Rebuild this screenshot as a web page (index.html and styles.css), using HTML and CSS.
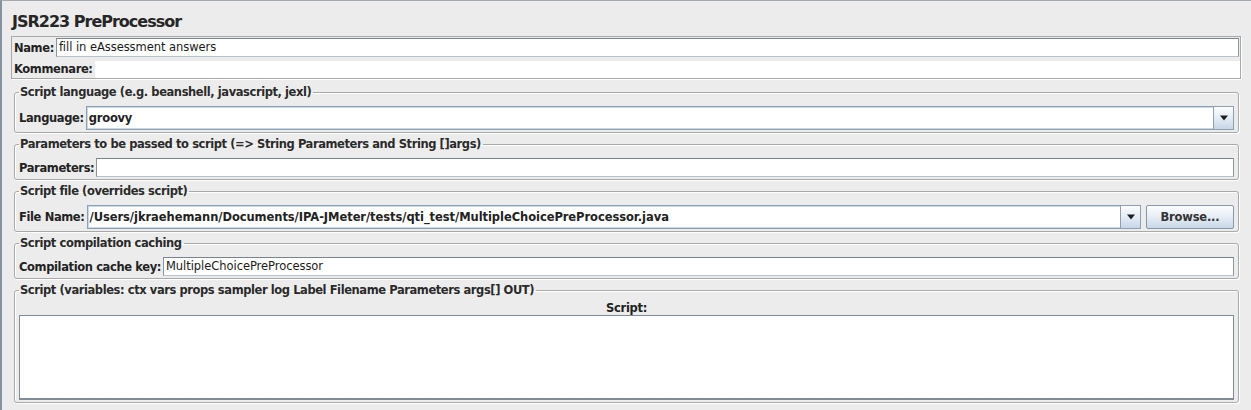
FILE: index.html
```html
<!DOCTYPE html>
<html>
<head>
<meta charset="utf-8">
<link rel="stylesheet" href="styles.css">
</head>
<body>
<div class="frame">
  <h1 class="title">JSR223 PreProcessor</h1>

  <div class="namepanel">
    <div class="row">
      <span class="lbl">Name:</span>
      <div class="field name-field">fill in eAssessment answers</div>
    </div>
    <div class="row comment-row">
      <span class="lbl">Kommenare:</span>
      <div class="comment-area"></div>
    </div>
  </div>

  <fieldset class="group">
    <legend>Script language (e.g. beanshell, javascript, jexl)</legend>
    <div class="row">
      <span class="lbl">Language:</span>
      <div class="combo">
        <span class="combo-text">groovy</span>
        <span class="combo-btn"><svg width="10" height="6" viewBox="0 0 10 6"><path d="M1 0.5h8L5 5.5z" fill="#1e1e1e"/></svg></span>
      </div>
    </div>
  </fieldset>

  <fieldset class="group">
    <legend>Parameters to be passed to script (=&gt; String Parameters and String []args)</legend>
    <div class="row">
      <span class="lbl">Parameters:</span>
      <div class="field"></div>
    </div>
  </fieldset>

  <fieldset class="group">
    <legend>Script file (overrides script)</legend>
    <div class="row">
      <span class="lbl">File Name:</span>
      <div class="combo">
        <span class="combo-text path">/Users/jkraehemann/Documents/IPA-JMeter/tests/qti_test/MultipleChoicePreProcessor.java</span>
        <span class="combo-btn"><svg width="10" height="6" viewBox="0 0 10 6"><path d="M1 0.5h8L5 5.5z" fill="#1e1e1e"/></svg></span>
      </div>
      <button class="btn">Browse...</button>
    </div>
  </fieldset>

  <fieldset class="group">
    <legend>Script compilation caching</legend>
    <div class="row">
      <span class="lbl">Compilation cache key:</span>
      <div class="field">MultipleChoicePreProcessor</div>
    </div>
  </fieldset>

  <fieldset class="group script-group">
    <legend>Script (variables: ctx vars props sampler log Label Filename Parameters args[] OUT)</legend>
    <div class="script-label">Script:</div>
    <div class="textarea"></div>
  </fieldset>
</div>
</body>
</html>
```

FILE: styles.css
```css
html, body {
  margin: 0;
  padding: 0;
  background: #ececec;
}

body {
  font-family: "DejaVu Sans", "Noto Sans", sans-serif;
  color: #1f1f1f;
  width: 1251px;
  height: 410px;
  overflow: hidden;
}

.frame {
  box-sizing: border-box;
  height: 410px;
  border-left: 2px solid #8593a0;
  border-top: 1px solid #a3a9ae;
  display: flex;
  flex-direction: column;
}

.title {
  margin: 11px 0 5px 10px;
  font-size: 16px;
  line-height: 19px;
  font-weight: bold;
  color: #262626;
  letter-spacing: -1px;
}

.row {
  display: flex;
  align-items: center;
  gap: 2px;
}

.lbl {
  font-size: 11.5px;
  font-weight: bold;
  color: #222;
  white-space: nowrap;
  letter-spacing: -0.38px;
}

/* Name / comment panel */
.namepanel {
  margin: 0 10px 6px 9px;
  border: 1px solid #a8a8a8;
  box-shadow: 1px 1px 0 #fff;
  padding: 1px 1px 0 2px;
  display: flex;
  flex-direction: column;
  gap: 4px;
}

.field {
  flex: 1;
  box-sizing: border-box;
  height: 19px;
  background: #fff;
  border: 1px solid #8b96a1;
  border-top-color: #77838f;
  border-bottom-color: #b9c1c9;
  font-size: 11.5px;
  line-height: 17px;
  padding-left: 2px;
  color: #1a1a1a;
  white-space: nowrap;
  overflow: hidden;
  letter-spacing: -0.05px;
}

.comment-row .lbl {
  padding-bottom: 1px;
}

.comment-area {
  flex: 1;
  height: 17px;
  background: #fff;
  margin-right: -1px;
}

/* Titled groups */
.group {
  margin: 0 12px 4px 12px;
  padding: 7px 4px 2px 4px;
  border: 1px solid #a9a9a9;
  border-radius: 3px;
  box-shadow: inset 1px 1px 0 #fff, 1px 1px 0 #fff;
  min-width: 0;
}

.group legend {
  padding: 0 2px 0 1px;
  font-size: 11.5px;
  line-height: 14px;
  font-weight: bold;
  color: #2a2a2a;
  letter-spacing: -0.42px;
}

.combo {
  flex: 1;
  display: flex;
  box-sizing: border-box;
  height: 24px;
  background: #fff;
  border: 1px solid #8e9fb1;
  box-shadow: inset 0 0 0 1px #c9d8ea;
  min-width: 0;
}

.combo-text {
  flex: 1;
  font-size: 11.5px;
  font-weight: bold;
  line-height: 22px;
  padding-left: 2px;
  color: #222;
  white-space: nowrap;
  overflow: hidden;
  letter-spacing: -0.2px;
}

.combo-text.path {
  letter-spacing: -0.06px;
}

.combo-btn {
  width: 19px;
  border-left: 1px solid #8e9fb1;
  background: linear-gradient(#fbfcfe, #e4ecf5 50%, #c6d6e8);
  display: flex;
  align-items: center;
  justify-content: center;
}

.btn {
  margin-left: 3px;
  box-sizing: border-box;
  width: 88px;
  height: 24px;
  border: 1px solid #8797a8;
  border-radius: 2px;
  background: linear-gradient(#fbfcfe, #e6edf5 50%, #c8d7e8);
  font-family: "DejaVu Sans", sans-serif;
  font-size: 11.5px;
  font-weight: bold;
  color: #333;
  padding: 0;
  letter-spacing: -0.2px;
}

.script-group {
  padding-top: 4px;
}

.script-label {
  text-align: center;
  font-size: 11.5px;
  font-weight: bold;
  line-height: 14px;
  color: #222;
  margin-bottom: 0;
  letter-spacing: -0.3px;
}

.textarea {
  height: 85px;
  box-sizing: border-box;
  background: #fff;
  border: 1px solid #7f8b97;
  border-bottom: 2px solid #7f8b97;
}
```
